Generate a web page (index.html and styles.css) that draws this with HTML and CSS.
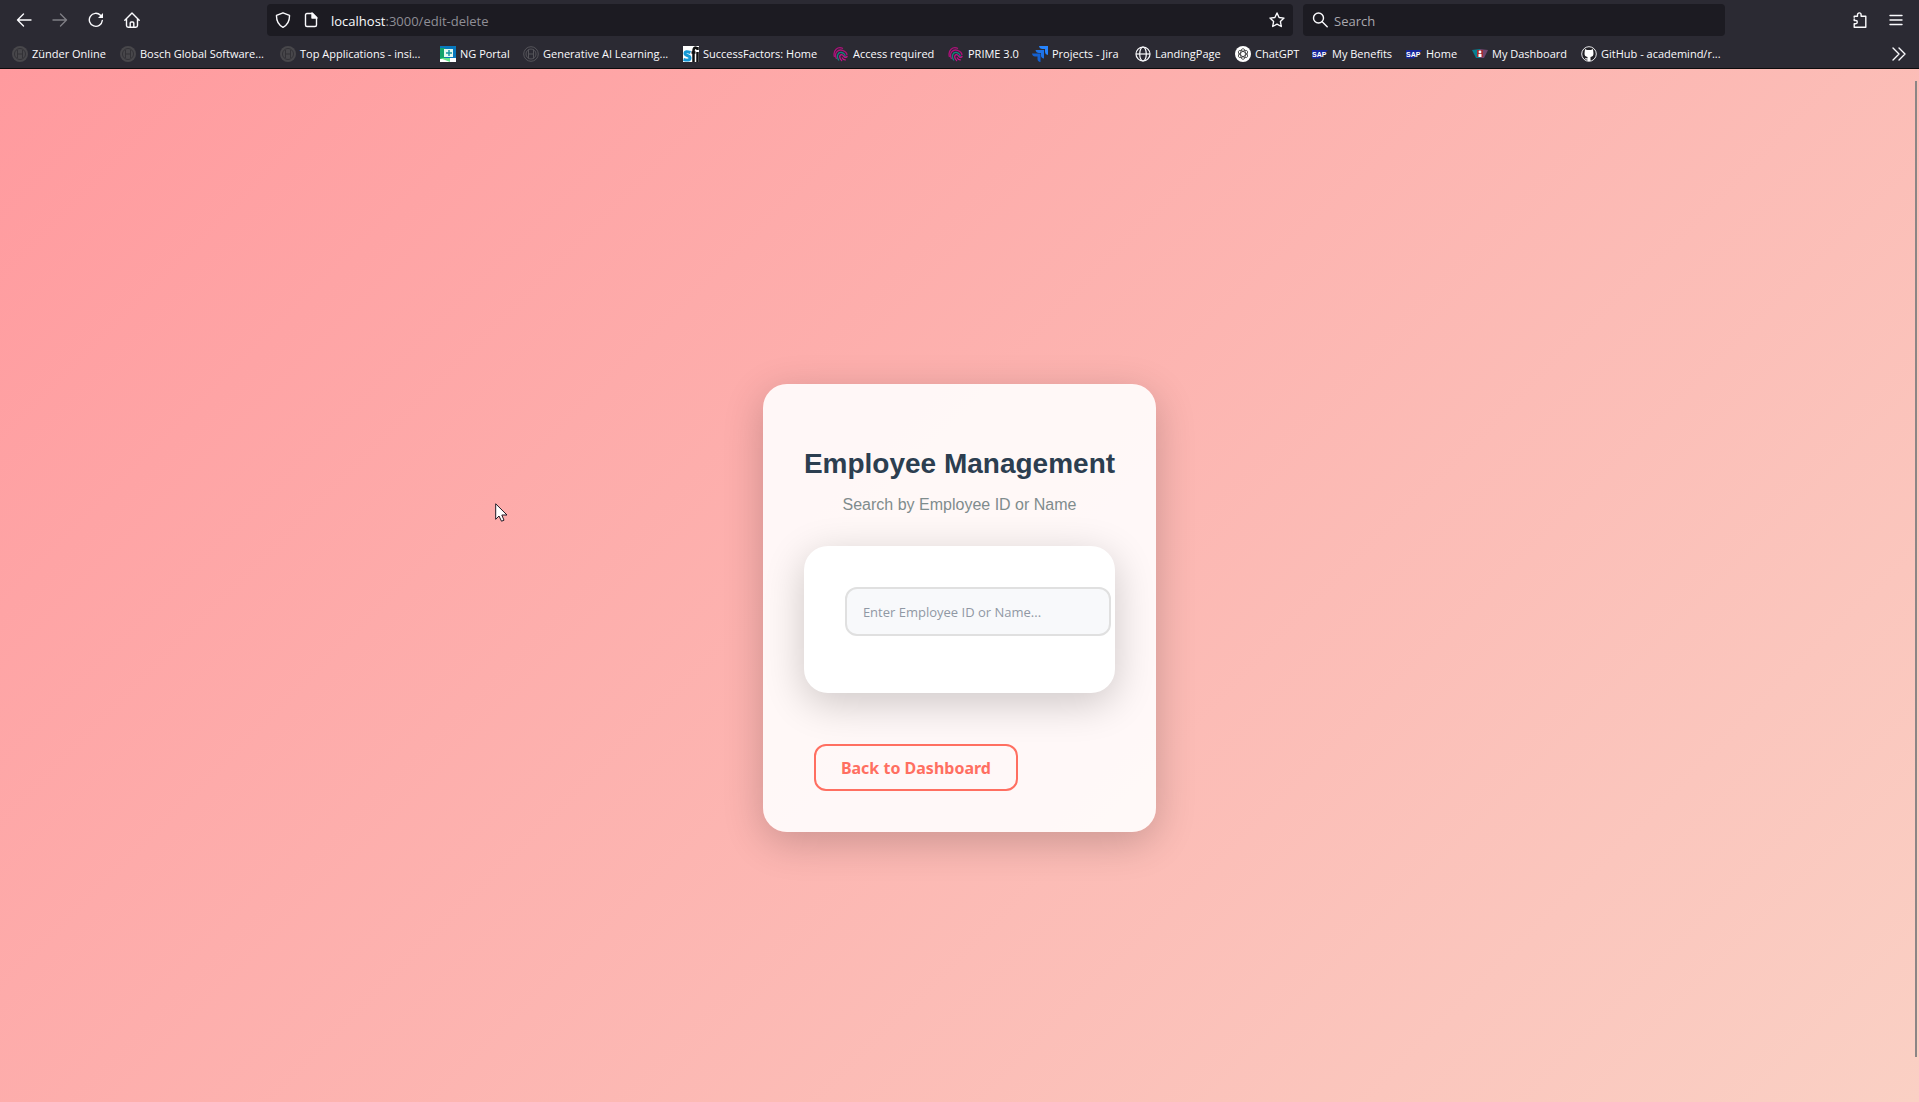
FILE: index.html
```html
<!DOCTYPE html>
<html lang="en">
<head>
<meta charset="utf-8">
<title>Employee Management</title>
<link rel="stylesheet" href="styles.css">
</head>
<body>
<svg class="defs" aria-hidden="true">
  <symbol id="bosch" viewBox="0 0 16 16"><circle cx="8" cy="8" r="8" fill="#48474b"/><g fill="none" stroke="#333237"><circle cx="8" cy="8" r="5.500"/><path d="M5.500 4v8M10.500 4v8M5.500 8h5"/></g></symbol>
  <symbol id="bosch-line" viewBox="0 0 16 16"><g fill="none" stroke="#55545a"><circle cx="8" cy="8" r="7.300"/><circle cx="8" cy="8" r="5" /><path d="M5.500 3.500v9M10.500 3.500v9M5.500 8h5"/></g></symbol>
  <symbol id="finger" viewBox="0 0 16 16"><g fill="none" stroke-width="1.300"><path d="M1.500 11C-.5 4 5 0 10 2.500" stroke="#b0107c"/><path d="M3.500 13C.5 7 5 3 9.500 4.300c3 1 4.500 2.700 4.500 5" stroke="#b0107c"/><path d="M6 14.500C2.500 9.500 5.500 6 8.500 6.500c2.500.5 4 2.500 3.500 4.500" stroke="#197f80"/><path d="M9 15c-3-2.500-3-6-.5-6.300 2-.1 2 2.300 3.500 2.600 1.200.2 2-.5 2.200-1.300M9 11.500c.7 1.700 2 2.500 3.800 2.300" stroke="#c4128a"/></g></symbol>
</svg>

<header class="browser">
  <div class="toolbar">
    <nav class="nav-buttons" aria-label="Navigation">
      <button class="tool" aria-label="Back"><svg viewBox="0 0 16 16"><path d="M15 8H1.500M7.500 2l-6 6 6 6"/></svg></button>
      <button class="tool" aria-label="Forward" disabled><svg viewBox="0 0 16 16"><path d="M1 8h13.500M8.500 2l6 6-6 6"/></svg></button>
      <button class="tool" aria-label="Reload"><svg viewBox="0 0 16 16"><path d="M14.300 8.500A6.500 6.500 0 1 1 12.500 3.300l1.500 1.500"/><path d="M15 1v5h-5z" fill="#fbfbfe" stroke="none"/></svg></button>
      <button class="tool" aria-label="Home"><svg viewBox="0 0 16 16"><path d="M.8 8.200 8 1l7.200 7.200M2.500 7v6.500q0 1.700 1.700 1.700h7.600q1.700 0 1.700-1.700V7M6.200 15v-4q0-1 1-1h1.600q1 0 1 1v4"/></svg></button>
    </nav>
    <div class="address">
      <svg class="icon" viewBox="0 0 16 16"><path d="M8 .8 14.500 3.300C14.700 9 12.500 13 8 15.300 3.500 13 1.300 9 1.500 3.300z"/></svg>
      <svg class="icon" viewBox="0 0 16 16"><path d="M4 1.500h5.500l4 4V13q0 1.500-1.500 1.500H4Q2.500 14.500 2.500 13V3Q2.500 1.500 4 1.500z"/><path d="M9 1v5h5z" fill="#fbfbfe"/></svg>
      <span class="url"><b>localhost</b>:3000/edit-delete</span>
      <button class="star" aria-label="Bookmark this page"><svg class="icon" viewBox="0 0 16 16"><path d="m8 1 2.100 4.500 4.900.6-3.600 3.400.9 5L8 12.100l-4.300 2.400.9-5L1 6.100l4.900-.6z"/></svg></button>
    </div>
    <label class="search">
      <svg class="icon" viewBox="0 0 16 16"><circle cx="6.500" cy="6" r="5"/><path d="m10.200 9.700 5 5"/></svg>
      <input type="search" placeholder="Search" aria-label="Search">
    </label>
    <div class="menu-buttons">
      <button class="tool" aria-label="Extensions"><svg viewBox="0 0 16 16"><path d="M2.200 5.200V4.200h3.300V2.700a1.800 1.800 0 0 1 3.600 0v1.500h4.700v11H2.200v-3.500h1.500a1.600 1.600 0 0 0 0-3.200H2.200V7"/></svg></button>
      <button class="tool" aria-label="Menu"><svg viewBox="0 0 16 16"><path d="M2 3.500h12M2 8h12M2 12.500h12"/></svg></button>
    </div>
  </div>
  <nav class="bookmarks" aria-label="Bookmarks">
    <a href="#"><svg><use href="#bosch"/></svg>Zünder Online</a>
    <a href="#"><svg><use href="#bosch"/></svg>Bosch Global Software...</a>
    <a href="#"><svg><use href="#bosch"/></svg>Top Applications - insi...</a>
    <a href="#"><svg viewBox="0 0 16 16"><path fill="#fff" d="M0 0h16v16H0z"/><path fill="#0878bd" d="M0 0h16v12H5V3H0z"/><path fill="#14a36a" d="M0 2h5v11H0z"/><path fill="#65e58a" d="M0 12h10v4z"/><path fill="#e5fbf0" d="M4 3h9v8H4z"/><path fill="none" stroke="#1695a0" stroke-width="1.500" d="M6 7h6M9 4v6"/></svg>NG Portal</a>
    <a href="#"><svg><use href="#bosch-line"/></svg>Generative AI Learning...</a>
    <a href="#"><svg viewBox="0 0 16 16"><path fill="#fff" d="M0 0h16v16H0z"/><path fill="none" stroke="#1599d6" stroke-width="3" d="M7.500 6.500Q2 4.500 2 7.500c0 2.500 5 1.500 5 4.500 0 2.500-3 2.500-6.500 1.500"/><path fill="none" stroke="#111" stroke-width="2.500" d="M10.500 16V4.500q0-3 3-3M8.500 6.500h4M14.500 6v10M14.500 1v3"/></svg>SuccessFactors: Home</a>
    <a href="#"><svg><use href="#finger"/></svg>Access required</a>
    <a href="#"><svg><use href="#finger"/></svg>PRIME 3.0</a>
    <a href="#"><svg viewBox="0 0 16 16"><path fill="#2684ff" d="M7 0h9v9q-3-.5-3-3.500V3h-2.500Q7.500 3 7 0z"/><path fill="#1e73e8" d="M3.500 4h8.500v8.500q-3-.5-3-3V7H7Q4 7 3.500 4z"/><path fill="#1560d0" d="M0 7.500h8.500V16q-3-.5-3-3v-2.500H3Q.5 10.500 0 7.500z"/></svg>Projects - Jira</a>
    <a href="#"><svg viewBox="0 0 16 16" fill="none" stroke="#fbfbfe" stroke-width="1.200"><circle cx="8" cy="8" r="7"/><ellipse cx="8" cy="8" rx="3.300" ry="7"/><path d="M1 8h14"/></svg>LandingPage</a>
    <a href="#"><svg viewBox="0 0 16 16"><circle cx="8" cy="8" r="8" fill="#fff"/><g fill="none" stroke="#333" stroke-width=".8"><ellipse cx="8" cy="8" rx="2.400" ry="5.300"/><ellipse cx="8" cy="8" rx="2.400" ry="5.300" transform="rotate(60 8 8)"/><ellipse cx="8" cy="8" rx="2.400" ry="5.300" transform="rotate(120 8 8)"/></g></svg>ChatGPT</a>
    <a href="#"><svg viewBox="0 0 16 16"><path d="M0 4h16l-8 8.500H0z" fill="#16259b"/><text class="sap" x="0" y="11">SAP</text></svg>My Benefits</a>
    <a href="#"><svg viewBox="0 0 16 16"><path d="M0 4h16l-8 8.500H0z" fill="#16259b"/><text class="sap" x="0" y="11">SAP</text></svg>Home</a>
    <a href="#"><svg viewBox="0 0 16 16"><path fill="#087f91" d="M0 4l8-1v9H4z"/><path fill="#71466f" d="M8 3l8 1-4 8H8z"/><path fill="#a52d32" d="M5 4h6v7H5z"/><circle cx="8" cy="6" r="1.400" fill="#fff"/><path fill="#fff" d="M6.500 8h3v3h-3z"/></svg>My Dashboard</a>
    <a href="#"><svg viewBox="0 0 16 16"><circle cx="8" cy="8" r="7.300" fill="#222126" stroke="#e8e8ec"/><path fill="#fff" d="M4 3l2 1h4l2-1 .4 3.500Q13 10.500 9.500 11v4h-3v-1.500Q4.500 14 4 12l2.500.5V11Q3 10.500 3.600 6.500z"/></svg>GitHub - academind/r...</a>
    <button class="more" aria-label="More bookmarks"><svg viewBox="0 0 16 16"><path d="m2 2 6 6-6 6M8 2l6 6-6 6"/></svg></button>
  </nav>
</header>

<main class="page">
  <section class="card">
    <h1>Employee Management</h1>
    <p class="lead">Search by Employee ID or Name</p>
    <form class="panel">
      <input class="field" type="text" placeholder="Enter Employee ID or Name..." aria-label="Employee ID or name">
    </form>
    <button class="back">Back to Dashboard</button>
  </section>
  <div class="scroll-thumb"></div>
</main>
<svg class="cursor" viewBox="0 0 13 20" aria-hidden="true"><path d="M.7.8v15.500L4 13l2.500 5.200 2.500-1L6.800 12H12z" fill="#fff" stroke="#201824"/></svg>
</body>
</html>
```

FILE: styles.css
```css
* { box-sizing: border-box; }

body {
  margin: 0;
  height: 100vh;
  display: flex;
  flex-direction: column;
  overflow: hidden;
  font-family: "Open Sans", "Noto Sans", sans-serif;
}

button { border: 0; background: none; padding: 0; }
.defs { position: absolute; width: 0; height: 0; }

/* Browser chrome */
.browser {
  flex: none;
  background: #2b2a33;
  border-bottom: 1px solid #0c0c0d;
  color: #fbfbfe;
}

.toolbar {
  display: flex;
  align-items: center;
  height: 40px;
}

.nav-buttons, .menu-buttons { display: flex; gap: 4px; }
.nav-buttons { flex: none; padding-left: 8px; width: 267px; }
.menu-buttons { margin-left: auto; padding-right: 7px; }

.tool {
  width: 32px;
  height: 32px;
  display: grid;
  place-items: center;
}

.tool svg, .icon, .more svg {
  width: 16px;
  height: 16px;
  flex: none;
  display: block;
  fill: none;
  stroke: #fbfbfe;
  stroke-width: 1.400;
  stroke-linejoin: round;
  stroke-linecap: round;
}

.tool:disabled { opacity: 0.4; }

.address, .search {
  display: flex;
  align-items: center;
  height: 32px;
  border-radius: 4px;
  background: #1c1b22;
  font-size: 13px;
}

.address { flex: 5 1 0; padding: 0 8px; gap: 12px; }
.search { flex: 2 1 0; margin: 0 119px 0 10px; padding: 0 9px; gap: 6px; }
.url { flex: 1; padding-top: 2px; color: #8f8e96; }
.url b { font-weight: 400; color: #fbfbfe; }

.search input {
  flex: 1;
  min-width: 0;
  border: 0;
  padding: 2px 0 0;
  background: none;
  font: inherit;
  color: #fbfbfe;
}
.search input::placeholder { color: #a9a8ae; opacity: 1; }

.bookmarks {
  display: grid;
  grid-template-columns: 108px 160px 160px 83px 160px 150px 115px 84px 103px 100px 77px 94px 66px 109px 1fr 24px;
  align-items: center;
  height: 28px;
  padding: 0 8px 0 12px;
}

.bookmarks a {
  display: flex;
  align-items: center;
  gap: 4px;
  color: #fbfbfe;
  font-size: 11px;
  line-height: 16px;
  text-decoration: none;
  white-space: nowrap;
}
.bookmarks a svg { width: 16px; height: 16px; flex: none; }
.sap { font: bold 7px "Liberation Sans", Arial, sans-serif; fill: #fff; }
.more { display: grid; place-items: center; }

/* Page */
.page {
  flex: 1;
  position: relative;
  display: flex;
  justify-content: center;
  align-items: center;
  padding-top: 45px;
  background: linear-gradient(135deg, #ff9a9e, #fad0c4);
}

.card {
  display: flex;
  flex-direction: column;
  padding: 64px 41px 41px;
  border-radius: 24px;
  background: rgba(255, 255, 255, 0.9);
  box-shadow: 0 10px 40px rgba(0, 0, 0, 0.2);
}

h1, .lead {
  margin: 0;
  font-family: "Liberation Sans", Arial, sans-serif;
  text-align: center;
}
h1 { font-size: 28px; line-height: 32px; color: #2c3e50; }
.lead { margin-top: 16px; font-size: 16px; line-height: 18px; color: #7f8c8d; }

/* The panel takes its width from the heading; the field may run into its padding. */
.panel {
  contain: inline-size;
  margin-top: 32px;
  height: 147px;
  padding: 41px;
  border-radius: 24px;
  background: #fff;
  box-shadow: 0 10px 40px rgba(0, 0, 0, 0.2);
}

.field {
  width: 266px;
  height: 49px;
  padding: 0 16px;
  border: 2px solid #e0e0e0;
  border-radius: 12px;
  background: #f8f9fb;
  font: 13px "Open Sans", "Noto Sans", sans-serif;
}
.field::placeholder { color: #9098a4; opacity: 1; }

.back {
  align-self: flex-start;
  margin: 51px 10px 0;
  height: 47px;
  padding: 0 25px;
  border: 2px solid #ff6f61;
  border-radius: 12px;
  color: #ff6f61;
  font: bold 16px "Noto Sans", sans-serif;
}

.scroll-thumb {
  position: absolute;
  top: 12px;
  right: 2px;
  bottom: 45px;
  width: 2px;
  background: #8b8585;
}

.cursor {
  position: absolute;
  left: 495px;
  top: 503px;
  width: 13px;
  height: 20px;
}
```
